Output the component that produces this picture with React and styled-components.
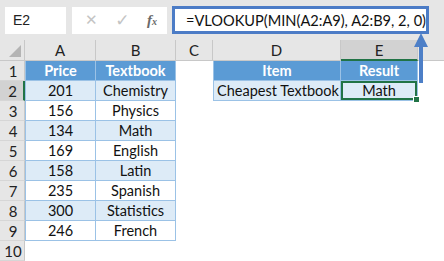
import styled, { createGlobalStyle, css } from "styled-components";

const GlobalStyle = createGlobalStyle`
  html, body { margin: 0; padding: 0; background: #fff; }
  body { font-family: Lato, "Liberation Sans", sans-serif; }
`;

const prices = [
  ["201", "Chemistry"],
  ["156", "Physics"],
  ["134", "Math"],
  ["169", "English"],
  ["158", "Latin"],
  ["235", "Spanish"],
  ["300", "Statistics"],
  ["246", "French"],
];

export default function App() {
  return (
    <Page>
      <GlobalStyle />
      <FormulaBar>
        <NameBox>E2</NameBox>
        <Buttons>
          <Glyph>✕</Glyph>
          <Glyph $check>✓</Glyph>
          <Fx>
            f<sub>x</sub>
          </Fx>
        </Buttons>
        <FormulaInput>=VLOOKUP(MIN(A2:A9), A2:B9, 2, 0)</FormulaInput>
      </FormulaBar>

      <Sheet>
        <Corner>
          <Triangle />
        </Corner>
        <ColHead>A</ColHead>
        <ColHead>B</ColHead>
        <ColHead>C</ColHead>
        <ColHead>D</ColHead>
        <ColHead $active>E</ColHead>
        <ColHead $last />

        {Array.from({ length: 10 }, (_, i) => {
          const r = i + 1;
          const row = r >= 2 && r <= 9 ? prices[r - 2] : null;
          const band = r % 2 === 0;
          return [
            <RowHead key={`h${r}`} $active={r === 2}>
              {r}
            </RowHead>,
            r === 1 ? (
              <Head key={`a${r}`} $first>Price</Head>
            ) : row ? (
              <Cell key={`a${r}`} $first $band={band}>{row[0]}</Cell>
            ) : (
              <Blank key={`a${r}`} />
            ),
            r === 1 ? (
              <Head key={`b${r}`}>Textbook</Head>
            ) : row ? (
              <Cell key={`b${r}`} $band={band}>{row[1]}</Cell>
            ) : (
              <Blank key={`b${r}`} />
            ),
            <Blank key={`c${r}`} />,
            r === 1 ? (
              <Head key={`d${r}`} $first>Item</Head>
            ) : r === 2 ? (
              <Cell key={`d${r}`} $first $band $left>Cheapest Textbook</Cell>
            ) : (
              <Blank key={`d${r}`} />
            ),
            r === 1 ? (
              <Head key={`e${r}`}>Result</Head>
            ) : r === 2 ? (
              <Cell key={`e${r}`} $band $selected>
                Math
                <Handle />
              </Cell>
            ) : (
              <Blank key={`e${r}`} />
            ),
            <Blank key={`f${r}`} />,
          ];
        })}
      </Sheet>

      <Arrow width="16" height="50" viewBox="0 0 16 50">
        <path d="M8 0 L15 14 L10 14 L10 50 L6 50 L6 14 L1 14 Z" fill="#4d7fc7" />
      </Arrow>
    </Page>
  );
}

const Page = styled.div`
  position: relative;
  width: 444px;
  height: 261px;
  overflow: hidden;
  background: #fff;
`;

const FormulaBar = styled.div`
  display: flex;
  align-items: center;
  height: 40px;
  padding: 0 15px 0 5px;
  background: #e6e6e6;
  box-sizing: border-box;
`;

const NameBox = styled.div`
  width: 70px;
  height: 27px;
  box-sizing: border-box;
  background: #fff;
  padding-left: 8px;
  display: flex;
  align-items: center;
  font-family: "Liberation Sans", sans-serif;
  font-size: 14px;
  color: #222;
`;

const Buttons = styled.div`
  margin-left: 6px;
  width: 107px;
  height: 27px;
  background: #fff;
  display: flex;
  align-items: center;
  justify-content: space-between;
  padding: 0 10px 0 13px;
  box-sizing: border-box;
`;

const Glyph = styled.span`
  font-family: "DejaVu Sans", sans-serif;
  font-size: ${(p) => (p.$check ? "17px" : "15px")};
  color: #c4c4c4;
  font-weight: ${(p) => (p.$check ? 700 : 400)};
`;

const Fx = styled.span`
  font-family: "Liberation Serif", serif;
  font-style: italic;
  font-weight: 700;
  font-size: 15px;
  color: #6a6a6a;
  sub {
    font-size: 10px;
    vertical-align: 0;
  }
`;

const FormulaInput = styled.div`
  margin-left: 5px;
  flex: 1;
  height: 28px;
  box-sizing: border-box;
  border: 3px solid #4c7cc6;
  background: #fff;
  display: flex;
  align-items: center;
  padding-left: 11px;
  font-family: Lato, "Liberation Sans", sans-serif;
  font-size: 14.6px;
  color: #111;
  white-space: nowrap;
`;

const Sheet = styled.div`
  display: grid;
  grid-template-columns: 25px 71px 80px 37px 128px 77px 1fr;
  grid-template-rows: 21px repeat(10, 20px);
  font-family: Lato, "Liberation Sans", sans-serif;
  font-size: 14.5px;
`;

const Corner = styled.div`
  background: #e6e6e6;
  border-right: 1px solid #c8c8c8;
  border-bottom: 1px solid #c8c8c8;
  position: relative;
`;

const Triangle = styled.div`
  position: absolute;
  right: 3px;
  bottom: 3px;
  width: 0;
  height: 0;
  border-left: 12px solid transparent;
  border-bottom: 12px solid #b4b4b4;
`;

const headerBase = css`
  background: #e6e6e6;
  display: flex;
  align-items: center;
  justify-content: center;
  color: #222;
  font-size: 15px;
  box-sizing: border-box;
`;

const ColHead = styled.div`
  ${headerBase}
  border-right: ${(p) => (p.$last ? "none" : "1px solid #c8c8c8")};
  border-bottom: ${(p) => (p.$active ? "2px solid #217346" : "1px solid #c8c8c8")};
  background: ${(p) => (p.$active ? "#d2d2d2" : "#e6e6e6")};
  padding-top: ${(p) => (p.$active ? "1px" : "0")};
`;

const RowHead = styled.div`
  ${headerBase}
  border-right: ${(p) => (p.$active ? "2px solid #217346" : "1px solid #c8c8c8")};
  border-bottom: 1px solid #d6d6d6;
  background: ${(p) => (p.$active ? "#d2d2d2" : "#e6e6e6")};
  padding-left: 2px;
`;

const Blank = styled.div`
  background: #fff;
`;

const cellBase = css`
  display: flex;
  align-items: center;
  box-sizing: border-box;
  border-right: 1px solid #9bc2e6;
  border-bottom: 1px solid #9bc2e6;
  border-left: ${(p) => (p.$first ? "1px solid #9bc2e6" : "none")};
  white-space: nowrap;
`;

const Head = styled.div`
  ${cellBase}
  justify-content: center;
  background: #5b9bd5;
  color: #fff;
  font-weight: 700;
  border-color: #9bc2e6;
`;

const Cell = styled.div`
  ${cellBase}
  position: relative;
  justify-content: ${(p) => (p.$left ? "flex-start" : "center")};
  padding-left: ${(p) => (p.$left ? "3px" : "0")};
  background: ${(p) => (p.$band ? "#ddebf7" : "#fff")};
  color: #111;
  ${(p) =>
    p.$selected &&
    css`
      box-shadow: inset 0 0 0 2px #217346;
    `}
`;

const Handle = styled.span`
  position: absolute;
  right: -3px;
  bottom: -3px;
  width: 5px;
  height: 5px;
  background: #217346;
  border: 1px solid #fff;
`;

const Arrow = styled.svg`
  position: absolute;
  left: 413px;
  top: 33px;
`;
